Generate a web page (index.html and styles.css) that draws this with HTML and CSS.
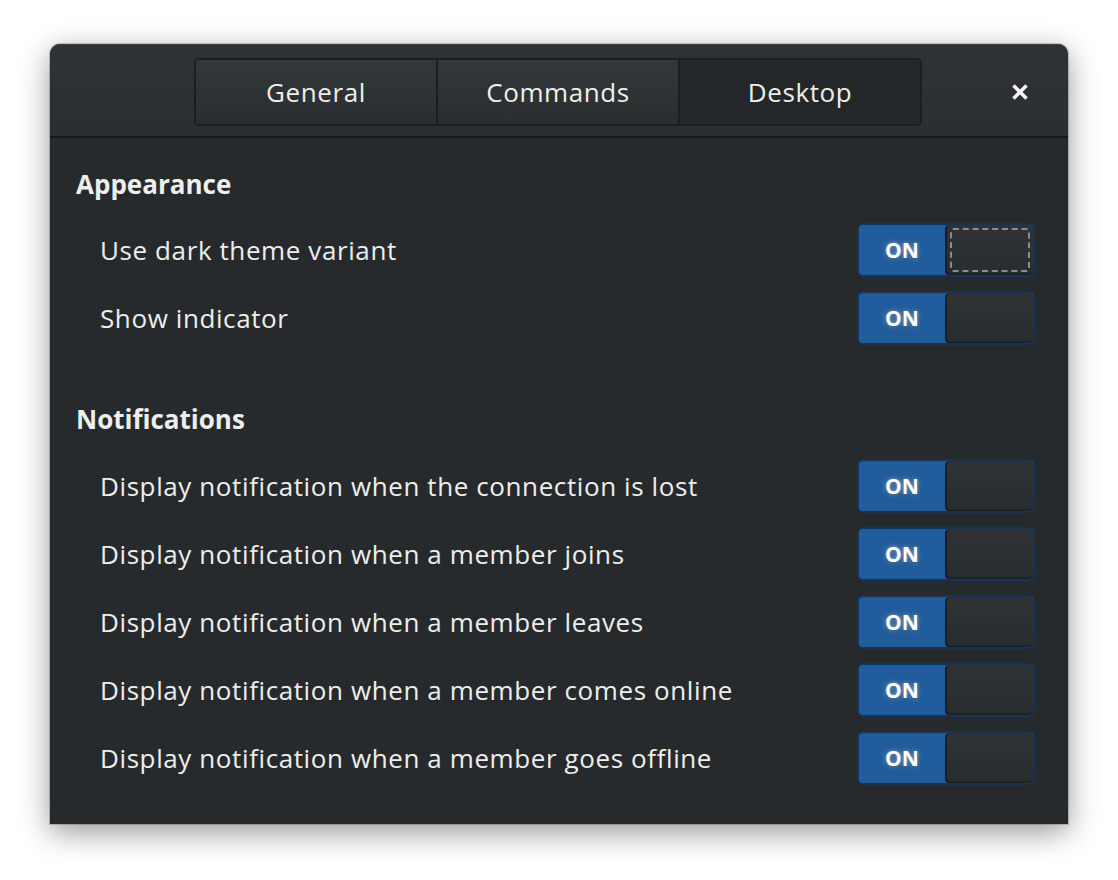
FILE: index.html
```html
<!DOCTYPE html>
<html>
<head>
<meta charset="utf-8">
<link rel="stylesheet" href="styles.css">
</head>
<body>
<div class="window">
  <div class="header">
    <div class="tabs">
      <div class="tab">General</div>
      <div class="tab">Commands</div>
      <div class="tab active">Desktop</div>
    </div>
    <div class="close">
      <svg width="18" height="18" viewBox="0 0 18 18"><path d="M2.5 2.5 L15.5 15.5 M15.5 2.5 L2.5 15.5" stroke="#f4f4f2" stroke-width="3.6" stroke-linecap="butt"/></svg>
    </div>
  </div>
  <div class="content">
    <div class="heading">Appearance</div>
    <div class="row"><span class="label">Use dark theme variant</span><div class="switch"><span class="on">ON</span><span class="knob focus"></span></div></div>
    <div class="row"><span class="label">Show indicator</span><div class="switch"><span class="on">ON</span><span class="knob"></span></div></div>
    <div class="heading second">Notifications</div>
    <div class="row"><span class="label">Display notification when the connection is lost</span><div class="switch"><span class="on">ON</span><span class="knob"></span></div></div>
    <div class="row"><span class="label">Display notification when a member joins</span><div class="switch"><span class="on">ON</span><span class="knob"></span></div></div>
    <div class="row"><span class="label">Display notification when a member leaves</span><div class="switch"><span class="on">ON</span><span class="knob"></span></div></div>
    <div class="row"><span class="label">Display notification when a member comes online</span><div class="switch"><span class="on">ON</span><span class="knob"></span></div></div>
    <div class="row"><span class="label">Display notification when a member goes offline</span><div class="switch"><span class="on">ON</span><span class="knob"></span></div></div>
  </div>
</div>
</body>
</html>
```
FILE: styles.css
```css
html, body {
  margin: 0;
  padding: 0;
  background: #ffffff;
}
body {
  width: 1118px;
  height: 880px;
  overflow: hidden;
  font-family: "Open Sans", "Noto Sans", sans-serif;
}
.window {
  margin: 44px 0 0 50px;
  width: 1018px;
  height: 780px;
  border-radius: 10px 10px 0 0;
  background: #272a2c;
  box-shadow: 0 8px 30px rgba(0,0,0,0.42), 0 0 0 1px rgba(0,0,0,0.18);
  display: flex;
  flex-direction: column;
  overflow: hidden;
}
.header {
  height: 88px;
  padding-top: 4px;
  flex: none;
  background: linear-gradient(#2f3336, #2b2f32);
  border-bottom: 2px solid #161819;
  display: flex;
  align-items: center;
  box-shadow: inset 0 1px 0 rgba(255,255,255,0.06);
}
.tabs {
  margin-left: 144px;
  display: flex;
  width: 728px;
  height: 68px;
  box-sizing: border-box;
  border: 2px solid #1c1f21;
  border-radius: 5px;
  overflow: hidden;
}
.tab {
  flex: 1;
  display: flex;
  align-items: center;
  justify-content: center;
  color: #eeeeec;
  font-size: 26px;
  letter-spacing: 0.6px;
  background: linear-gradient(#32373a, #2a2e31);
  border-right: 2px solid #1c1f21;
  box-shadow: inset 0 1px 0 rgba(255,255,255,0.04);
}
.tab:last-child { border-right: none; }
.tab.active {
  background: #232729;
  box-shadow: none;
}
.close {
  margin-left: 89px;
  width: 18px;
  height: 18px;
  display: flex;
}
.content {
  padding: 28px 33px 0 26px;
  display: flex;
  flex-direction: column;
  color: #eeeeec;
}
.heading {
  height: 36px;
  line-height: 36px;
  font-size: 26px;
  font-weight: 700;
  margin-bottom: 14px;
}
.heading.second {
  margin-top: 49px;
  margin-bottom: 15px;
}
.row {
  height: 68px;
  display: flex;
  align-items: center;
  justify-content: space-between;
  padding-left: 24px;
}
.label {
  font-size: 26px;
  letter-spacing: 0.6px;
  color: #eeeeec;
}
.switch {
  width: 178px;
  height: 54px;
  box-sizing: border-box;
  border: 2px solid #173356;
  border-radius: 6px;
  background: #215d9c;
  display: flex;
  overflow: hidden;
}
.on {
  width: 86px;
  display: flex;
  align-items: center;
  justify-content: center;
  font-family: "Open Sans", sans-serif;
  font-weight: 700;
  font-size: 21px;
  color: #ffffff;
  text-shadow: 0 0 4px rgba(255,255,255,0.5), 0 1px 2px rgba(0,0,0,0.4);
}
.knob {
  flex: 1;
  position: relative;
  background: linear-gradient(#2f3336, #2a2d30);
  border-left: 2px solid #1b1e20;
  border-radius: 4px;
  box-shadow: inset 0 -2px 0 #1f2224;
}
.knob.focus::after {
  content: "";
  position: absolute;
  left: 3px;
  top: 3px;
  right: 3px;
  bottom: 3px;
  border: 2px dashed #8a8c8e;
  border-radius: 3px;
}
```
